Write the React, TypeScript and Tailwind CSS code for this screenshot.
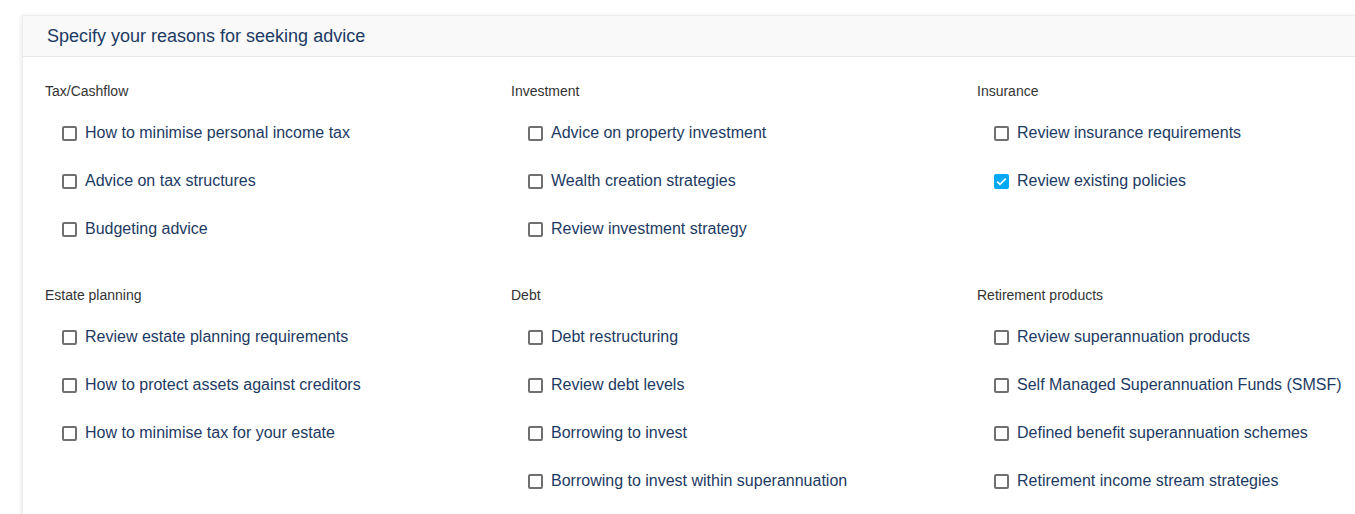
import { useState } from "react";

type Group = { title: string; items: string[] };

const rows: Group[][] = [
  [
    {
      title: "Tax/Cashflow",
      items: ["How to minimise personal income tax", "Advice on tax structures", "Budgeting advice"],
    },
    {
      title: "Investment",
      items: ["Advice on property investment", "Wealth creation strategies", "Review investment strategy"],
    },
    {
      title: "Insurance",
      items: ["Review insurance requirements", "Review existing policies"],
    },
  ],
  [
    {
      title: "Estate planning",
      items: [
        "Review estate planning requirements",
        "How to protect assets against creditors",
        "How to minimise tax for your estate",
      ],
    },
    {
      title: "Debt",
      items: [
        "Debt restructuring",
        "Review debt levels",
        "Borrowing to invest",
        "Borrowing to invest within superannuation",
      ],
    },
    {
      title: "Retirement products",
      items: [
        "Review superannuation products",
        "Self Managed Superannuation Funds (SMSF)",
        "Defined benefit superannuation schemes",
        "Retirement income stream strategies",
      ],
    },
  ],
];

function Checkbox({ checked }: { checked: boolean }) {
  if (checked) {
    return (
      <span className="flex h-[15px] w-[15px] shrink-0 items-center justify-center rounded-[2px] bg-[#03a9f4]">
        <svg viewBox="0 0 15 15" className="h-[15px] w-[15px]">
          <path d="M3.2 7.6l2.8 2.8L11.8 4.6" fill="none" stroke="white" strokeWidth="1.6" />
        </svg>
      </span>
    );
  }
  return <span className="block h-[15px] w-[15px] shrink-0 rounded-[2px] border-2 border-[#707070] bg-white" />;
}

export default function App() {
  const [checked, setChecked] = useState<Record<string, boolean>>({
    "Review existing policies": true,
  });

  return (
    <div className="h-[514px] w-[1355px] overflow-hidden bg-white font-['Liberation_Sans',Arial,sans-serif]">
      <div className="ml-[22px] mt-[15px] w-[1360px] border-t border-l border-[#ececec] bg-white pb-[40px] shadow-[-2px_0_4px_rgba(0,0,0,0.06)]">
        <div className="flex h-[41px] items-center border-b border-[#e6e6e6] bg-[#f9f9f9] px-[24px] text-[18px] text-[#1d3a63]">
          Specify your reasons for seeking advice
        </div>
        <div className="flex flex-col gap-[35px] pl-[22px] pt-[27px]">
          {rows.map((row, ri) => (
            <div key={ri} className="grid grid-cols-[466px_466px_466px]">
              {row.map((g) => (
                <div key={g.title}>
                  <p className="h-[15px] text-[14px] leading-[15px] text-[#333333]">{g.title}</p>
                  <ul className="mt-[10px]">
                    {g.items.map((item) => (
                      <li key={item}>
                        <label
                          className="flex h-[48px] cursor-pointer items-center gap-[8px] pl-[17px] text-[16px] text-[#1d3a63]"
                          onClick={() => setChecked((c) => ({ ...c, [item]: !c[item] }))}
                        >
                          <Checkbox checked={!!checked[item]} />
                          <span>{item}</span>
                        </label>
                      </li>
                    ))}
                  </ul>
                </div>
              ))}
            </div>
          ))}
        </div>
      </div>
    </div>
  );
}
